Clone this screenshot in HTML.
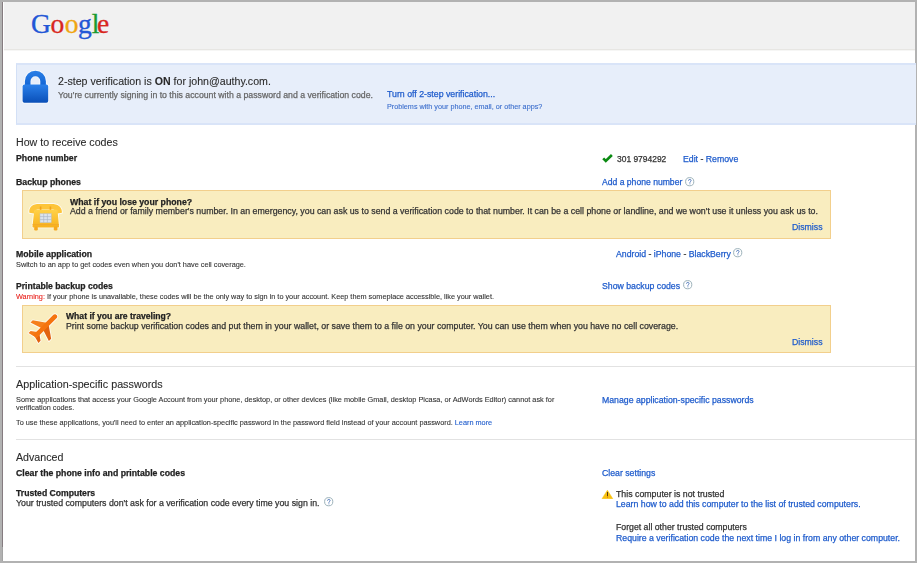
<!DOCTYPE html>
<html><head><meta charset="utf-8"><style>
html,body{margin:0;padding:0;width:917px;height:563px;overflow:hidden;background:#b2b2b2;}
#frame{position:absolute;left:0;top:0;width:917px;height:563px;background:#b2b2b2;}
#page{position:absolute;left:3px;top:2px;width:912px;height:559px;background:#fff;overflow:hidden;}
#lline{position:absolute;left:2px;top:2px;width:1px;height:545px;background:#857c80;}
#lline2{position:absolute;left:2px;top:547px;width:1px;height:14px;background:#a3a3a3;}
.t{position:absolute;white-space:nowrap;line-height:1;will-change:transform;-webkit-text-stroke:0.25px currentColor;font-family:"Liberation Sans",sans-serif;}
.q{position:absolute;width:10px;height:10px;line-height:0;}
#hdr{position:absolute;left:4px;top:2px;width:911px;height:47px;background:#f1f1f1;border-bottom:1px solid #e7e6e3;box-shadow:0 1px 0 #f6f6f5;}
#logo span{position:absolute;top:9.5px;font-family:"Liberation Serif",serif;font-size:27.5px;line-height:1;-webkit-text-stroke:0.35px currentColor;}
#banner{position:absolute;left:16px;top:63px;width:899px;height:58px;background:#e7eefa;border-top:2px solid #d9e4f8;border-bottom:2px solid #d9e4f8;border-left:1px solid #d3e0f6;}
.yb{position:absolute;left:22px;width:807px;background:#f9edbf;border:1px solid #f2cf8c;}
.sep{position:absolute;left:16px;width:899px;height:1px;background:#e2e2e2;}
</style></head><body>
<div id="frame"></div>
<div id="page"></div>
<div id="lline"></div><div id="lline2"></div>
<div id="hdr"></div>
<div id="logo"><span style="left:30.9px;color:#2357d6">G</span><span style="left:50.5px;color:#d8261d">o</span><span style="left:64.7px;color:#f0a410">o</span><span style="left:78px;color:#2357d6">g</span><span style="left:91.7px;color:#1d9b30">l</span><span style="left:97.1px;color:#d8261d">e</span></div>
<div id="banner"></div>
<svg style="position:absolute;left:20px;top:68px" width="31" height="38" viewBox="-2 -2 31 38">
 <defs><linearGradient id="lg" x1="0" y1="0" x2="0" y2="1"><stop offset="0" stop-color="#2a80ea"/><stop offset="1" stop-color="#0a4fb8"/></linearGradient>
 <linearGradient id="lg2" x1="0" y1="0" x2="0" y2="1"><stop offset="0" stop-color="#2b7fe6"/><stop offset="1" stop-color="#1366d6"/></linearGradient></defs>
 <path d="M2.9 15 V11.2 A10.5 10.5 0 0 1 23.9 11.2 V15 H18.3 V11.2 A4.9 4.9 0 0 0 8.5 11.2 V15 Z" fill="#fff" stroke="#fff" stroke-width="1.6" opacity="0.7"/>
 <rect x="0.6" y="14.6" width="25.6" height="18.1" rx="1.8" fill="#fff" stroke="#fff" stroke-width="1.6" opacity="0.7"/>
 <path d="M2.9 15 V11.2 A10.5 10.5 0 0 1 23.9 11.2 V15 H18.3 V11.2 A4.9 4.9 0 0 0 8.5 11.2 V15 Z" fill="url(#lg2)"/>
 <rect x="0.6" y="14.6" width="25.6" height="18.1" rx="1.8" fill="url(#lg)"/>
</svg>
<div class="yb" style="top:190px;height:47px"></div>
<div class="yb" style="top:305px;height:46px"></div>
<div class="sep" style="top:366px"></div>
<div class="sep" style="top:439px"></div>
<svg style="position:absolute;left:601px;top:153px" width="13" height="11" viewBox="0 0 13 11"><polyline points="2.2,5.3 4.8,8.0 10.9,2.0" fill="none" stroke="#0a8a12" stroke-width="2.6" stroke-linejoin="miter" stroke-linecap="butt"/></svg>
<svg style="position:absolute;left:601px;top:489px" width="13" height="10" viewBox="0 0 13 10"><path d="M6.4 1.2 L11.8 9.7 H1.0 Z" fill="#f8c10e" stroke="#f8c10e" stroke-width="0.5" stroke-linejoin="round"/><rect x="6" y="3" width="1" height="4.1" fill="#5a3b10"/><rect x="6" y="7.5" width="1" height="1.2" fill="#d9731a"/></svg>
<svg style="position:absolute;left:25px;top:198px" width="40" height="36" viewBox="0 0 40 36">
 <defs><linearGradient id="pg" x1="0" y1="0" x2="0" y2="1"><stop offset="0" stop-color="#ffd148"/><stop offset="1" stop-color="#f8b21e"/></linearGradient></defs>
 <g stroke="#fff" stroke-width="1.8" fill="#fff" opacity="0.75" stroke-linejoin="round">
  <path d="M4.4 14.8 C3.8 10.5 6 6.6 12 5.9 L28.5 5.9 C34.5 6.6 37.3 10.5 36.9 14.8 L32.2 15.6 C31.4 13.2 30.3 12 28.2 11.6 L12.4 11.6 C10.3 12 9.3 13.2 8.8 15.6 Z"/>
  <path d="M10.4 11.8 L31.6 11.8 C32.2 11.8 32.5 12.2 32.6 12.8 L34 28.4 C34 29 33.6 29.4 33 29.4 L8.4 29.4 C7.8 29.4 7.4 29 7.5 28.4 L9.2 12.8 C9.3 12.2 9.8 11.8 10.4 11.8 Z"/>
 </g>
 <path d="M4.4 14.8 C3.8 10.5 6 6.6 12 5.9 L28.5 5.9 C34.5 6.6 37.3 10.5 36.9 14.8 L32.2 15.6 C31.4 13.2 30.3 12 28.2 11.6 L12.4 11.6 C10.3 12 9.3 13.2 8.8 15.6 Z" fill="#fdc53a"/>
 <rect x="14.8" y="8.5" width="1.6" height="5" fill="#f3a21c"/><rect x="24.6" y="8.5" width="1.6" height="5" fill="#f3a21c"/>
 <path d="M10.4 11.8 L31.6 11.8 C32.2 11.8 32.5 12.2 32.6 12.8 L34 28.4 C34 29 33.6 29.4 33 29.4 L8.4 29.4 C7.8 29.4 7.4 29 7.5 28.4 L9.2 12.8 C9.3 12.2 9.8 11.8 10.4 11.8 Z" fill="url(#pg)"/>
 <rect x="7.5" y="26" width="26.5" height="1.2" fill="#f1a52a" opacity="0.7"/>
 <rect x="9.2" y="28.5" width="3.6" height="4" rx="1.2" fill="#f6a81f"/><rect x="28.8" y="28.5" width="3.6" height="4" rx="1.2" fill="#f6a81f"/>
 <rect x="15" y="15.7" width="11.2" height="8.9" fill="#dbe3ee" stroke="#b9c2cc" stroke-width="0.5"/>
 <path d="M15 18.6 H26.2 M15 21.6 H26.2 M18.7 15.7 V24.6 M22.4 15.7 V24.6" stroke="#a8b3c2" stroke-width="0.6"/>
</svg>
<svg style="position:absolute;left:25px;top:310px" width="36" height="36" viewBox="0 0 36 36">
 <g transform="translate(20.5 16) rotate(45)">
  <g fill="#fff" stroke="#fff" stroke-width="1.8" stroke-linejoin="round" opacity="0.8">
   <path d="M-2.3 -13.5 C-2.3 -16.3 2.3 -16.3 2.3 -13.5 L2.3 15.5 L-2.3 15.5 Z"/>
   <path d="M-1.5 -3 L-13 5 L-13 8.2 L-1.5 4.5 Z M1.5 -3 L13 5 L13 8.2 L1.5 4.5 Z"/>
   <path d="M-1.5 10 L-7 14 L-7 17 L-1.5 15.5 Z M1.5 10 L7 14 L7 17 L1.5 15.5 Z"/>
  </g>
  <path d="M-1.5 -3 L-13 5 L-13 8.2 L-1.5 4.5 Z" fill="#f57f1c"/>
  <path d="M1.5 -3 L13 5 L13 8.2 L1.5 4.5 Z" fill="#e2620f"/>
  <path d="M-1.5 10 L-7 14 L-7 17 L-1.5 15.5 Z" fill="#f57a1a"/>
  <path d="M1.5 10 L7 14 L7 17 L1.5 15.5 Z" fill="#e2620f"/>
  <path d="M-2.3 -13.5 C-2.3 -16.3 2.3 -16.3 2.3 -13.5 L2.3 15.5 L-2.3 15.5 Z" fill="#f5740f"/>
 </g>
</svg>
<div class="t" style="left:57.5px;top:76px;font-size:10.62px;color:#2a2a2a;-webkit-text-stroke-width:0.1px;">2-step verification is <b>ON</b> for john@authy.com.</div>
<div class="t" style="left:57.5px;top:91px;font-size:8.72px;color:#666;">You&#39;re currently signing in to this account with a password and a verification code.</div>
<div class="t" style="left:387px;top:90.4px;font-size:8.78px;color:#1f5ccc;">Turn off 2-step verification...</div>
<div class="t" style="left:387px;top:102.6px;font-size:7.23px;color:#3a6dcc;-webkit-text-stroke-width:0.1px;">Problems with your phone, email, or other apps?</div>
<div class="t" style="left:16.3px;top:137px;font-size:10.65px;color:#2a2a2a;-webkit-text-stroke-width:0.1px;">How to receive codes</div>
<div class="t" style="left:16.3px;top:154px;font-size:8.72px;color:#222;font-weight:bold;">Phone number</div>
<div class="t" style="left:617px;top:155px;font-size:8.45px;color:#333;">301 9794292</div>
<div class="t" style="left:682.6px;top:155px;font-size:8.72px;color:#1f5ccc;">Edit <span style="color:#333">-</span> Remove</div>
<div class="t" style="left:16.3px;top:178px;font-size:8.72px;color:#222;font-weight:bold;">Backup phones</div>
<div class="t" style="left:602.2px;top:178px;font-size:8.6px;color:#1f5ccc;">Add a phone number</div>
<div class="t" style="left:69.8px;top:198px;font-size:8.72px;color:#222;font-weight:bold;">What if you lose your phone?</div>
<div class="t" style="left:69.8px;top:207px;font-size:8.81px;color:#333;">Add a friend or family member&#39;s number. In an emergency, you can ask us to send a verification code to that number. It can be a cell phone or landline, and we won&#39;t use it unless you ask us to.</div>
<div class="t" style="left:791.6px;top:223px;font-size:8.72px;color:#1f5ccc;">Dismiss</div>
<div class="t" style="left:16px;top:250px;font-size:8.72px;color:#222;font-weight:bold;">Mobile application</div>
<div class="t" style="left:16px;top:261px;font-size:7.32px;color:#333;-webkit-text-stroke-width:0.1px;">Switch to an app to get codes even when you don&#39;t have cell coverage.</div>
<div class="t" style="left:615.6px;top:250px;font-size:8.72px;color:#1f5ccc;">Android <span style="color:#333">-</span> iPhone <span style="color:#333">-</span> BlackBerry</div>
<div class="t" style="left:16px;top:282px;font-size:8.64px;color:#222;font-weight:bold;">Printable backup codes</div>
<div class="t" style="left:16px;top:293px;font-size:7.31px;color:#333;-webkit-text-stroke-width:0.1px;"><span style="color:#e8201c">Warning:</span> If your phone is unavailable, these codes will be the only way to sign in to your account. Keep them someplace accessible, like your wallet.</div>
<div class="t" style="left:602.4px;top:282px;font-size:8.72px;color:#1f5ccc;">Show backup codes</div>
<div class="t" style="left:65.8px;top:312px;font-size:8.61px;color:#222;font-weight:bold;">What if you are traveling?</div>
<div class="t" style="left:65.8px;top:322px;font-size:8.79px;color:#333;">Print some backup verification codes and put them in your wallet, or save them to a file on your computer. You can use them when you have no cell coverage.</div>
<div class="t" style="left:791.5px;top:338px;font-size:8.72px;color:#1f5ccc;">Dismiss</div>
<div class="t" style="left:16.1px;top:379px;font-size:10.77px;color:#2a2a2a;-webkit-text-stroke-width:0.1px;">Application-specific passwords</div>
<div class="t" style="left:16.3px;top:396px;font-size:7.34px;color:#333;-webkit-text-stroke-width:0.1px;">Some applications that access your Google Account from your phone, desktop, or other devices (like mobile Gmail, desktop Picasa, or AdWords Editor) cannot ask for</div>
<div class="t" style="left:16.3px;top:404px;font-size:7.28px;color:#333;-webkit-text-stroke-width:0.1px;">verification codes.</div>
<div class="t" style="left:16.3px;top:419px;font-size:7.32px;color:#333;-webkit-text-stroke-width:0.1px;">To use these applications, you&#39;ll need to enter an application-specific password in the password field instead of your account password. <span style="color:#1f5ccc">Learn more</span></div>
<div class="t" style="left:602.4px;top:396px;font-size:8.72px;color:#1f5ccc;">Manage application-specific passwords</div>
<div class="t" style="left:16px;top:452px;font-size:10.65px;color:#2a2a2a;-webkit-text-stroke-width:0.1px;">Advanced</div>
<div class="t" style="left:16px;top:469px;font-size:8.72px;color:#222;font-weight:bold;">Clear the phone info and printable codes</div>
<div class="t" style="left:602.4px;top:469px;font-size:8.72px;color:#1f5ccc;">Clear settings</div>
<div class="t" style="left:16px;top:489px;font-size:8.63px;color:#222;font-weight:bold;">Trusted Computers</div>
<div class="t" style="left:16px;top:499px;font-size:8.79px;color:#333;">Your trusted computers don&#39;t ask for a verification code every time you sign in.</div>
<div class="t" style="left:616px;top:490px;font-size:8.79px;color:#333;">This computer is not trusted</div>
<div class="t" style="left:616px;top:500px;font-size:8.76px;color:#1f5ccc;">Learn how to add this computer to the list of trusted computers.</div>
<div class="t" style="left:616px;top:523px;font-size:8.72px;color:#333;">Forget all other trusted computers</div>
<div class="t" style="left:616px;top:534px;font-size:8.75px;color:#1f5ccc;">Require a verification code the next time I log in from any other computer.</div>
<div class="q" style="left:684.8px;top:176.8px"><svg width="10" height="10" viewBox="0 0 10 10"><circle cx="4.7" cy="4.7" r="4.1" fill="#fff" stroke="#98aeb6" stroke-width="0.95"/><path d="M3.5 3.7 C3.5 2.8 4.1 2.4 4.8 2.4 C5.6 2.4 6.1 2.9 6.1 3.6 C6.1 4.4 5 4.6 4.9 5.5 V5.9" fill="none" stroke="#4a73b8" stroke-width="0.9"/><rect x="4.45" y="6.4" width="0.9" height="0.9" fill="#4a73b8"/></svg></div>
<div class="q" style="left:733.0px;top:248.3px"><svg width="10" height="10" viewBox="0 0 10 10"><circle cx="4.7" cy="4.7" r="4.1" fill="#fff" stroke="#98aeb6" stroke-width="0.95"/><path d="M3.5 3.7 C3.5 2.8 4.1 2.4 4.8 2.4 C5.6 2.4 6.1 2.9 6.1 3.6 C6.1 4.4 5 4.6 4.9 5.5 V5.9" fill="none" stroke="#4a73b8" stroke-width="0.9"/><rect x="4.45" y="6.4" width="0.9" height="0.9" fill="#4a73b8"/></svg></div>
<div class="q" style="left:682.6999999999999px;top:280.29999999999995px"><svg width="10" height="10" viewBox="0 0 10 10"><circle cx="4.7" cy="4.7" r="4.1" fill="#fff" stroke="#98aeb6" stroke-width="0.95"/><path d="M3.5 3.7 C3.5 2.8 4.1 2.4 4.8 2.4 C5.6 2.4 6.1 2.9 6.1 3.6 C6.1 4.4 5 4.6 4.9 5.5 V5.9" fill="none" stroke="#4a73b8" stroke-width="0.9"/><rect x="4.45" y="6.4" width="0.9" height="0.9" fill="#4a73b8"/></svg></div>
<div class="q" style="left:323.8px;top:497.4px"><svg width="10" height="10" viewBox="0 0 10 10"><circle cx="4.7" cy="4.7" r="4.1" fill="#fff" stroke="#98aeb6" stroke-width="0.95"/><path d="M3.5 3.7 C3.5 2.8 4.1 2.4 4.8 2.4 C5.6 2.4 6.1 2.9 6.1 3.6 C6.1 4.4 5 4.6 4.9 5.5 V5.9" fill="none" stroke="#4a73b8" stroke-width="0.9"/><rect x="4.45" y="6.4" width="0.9" height="0.9" fill="#4a73b8"/></svg></div>
</body></html>
